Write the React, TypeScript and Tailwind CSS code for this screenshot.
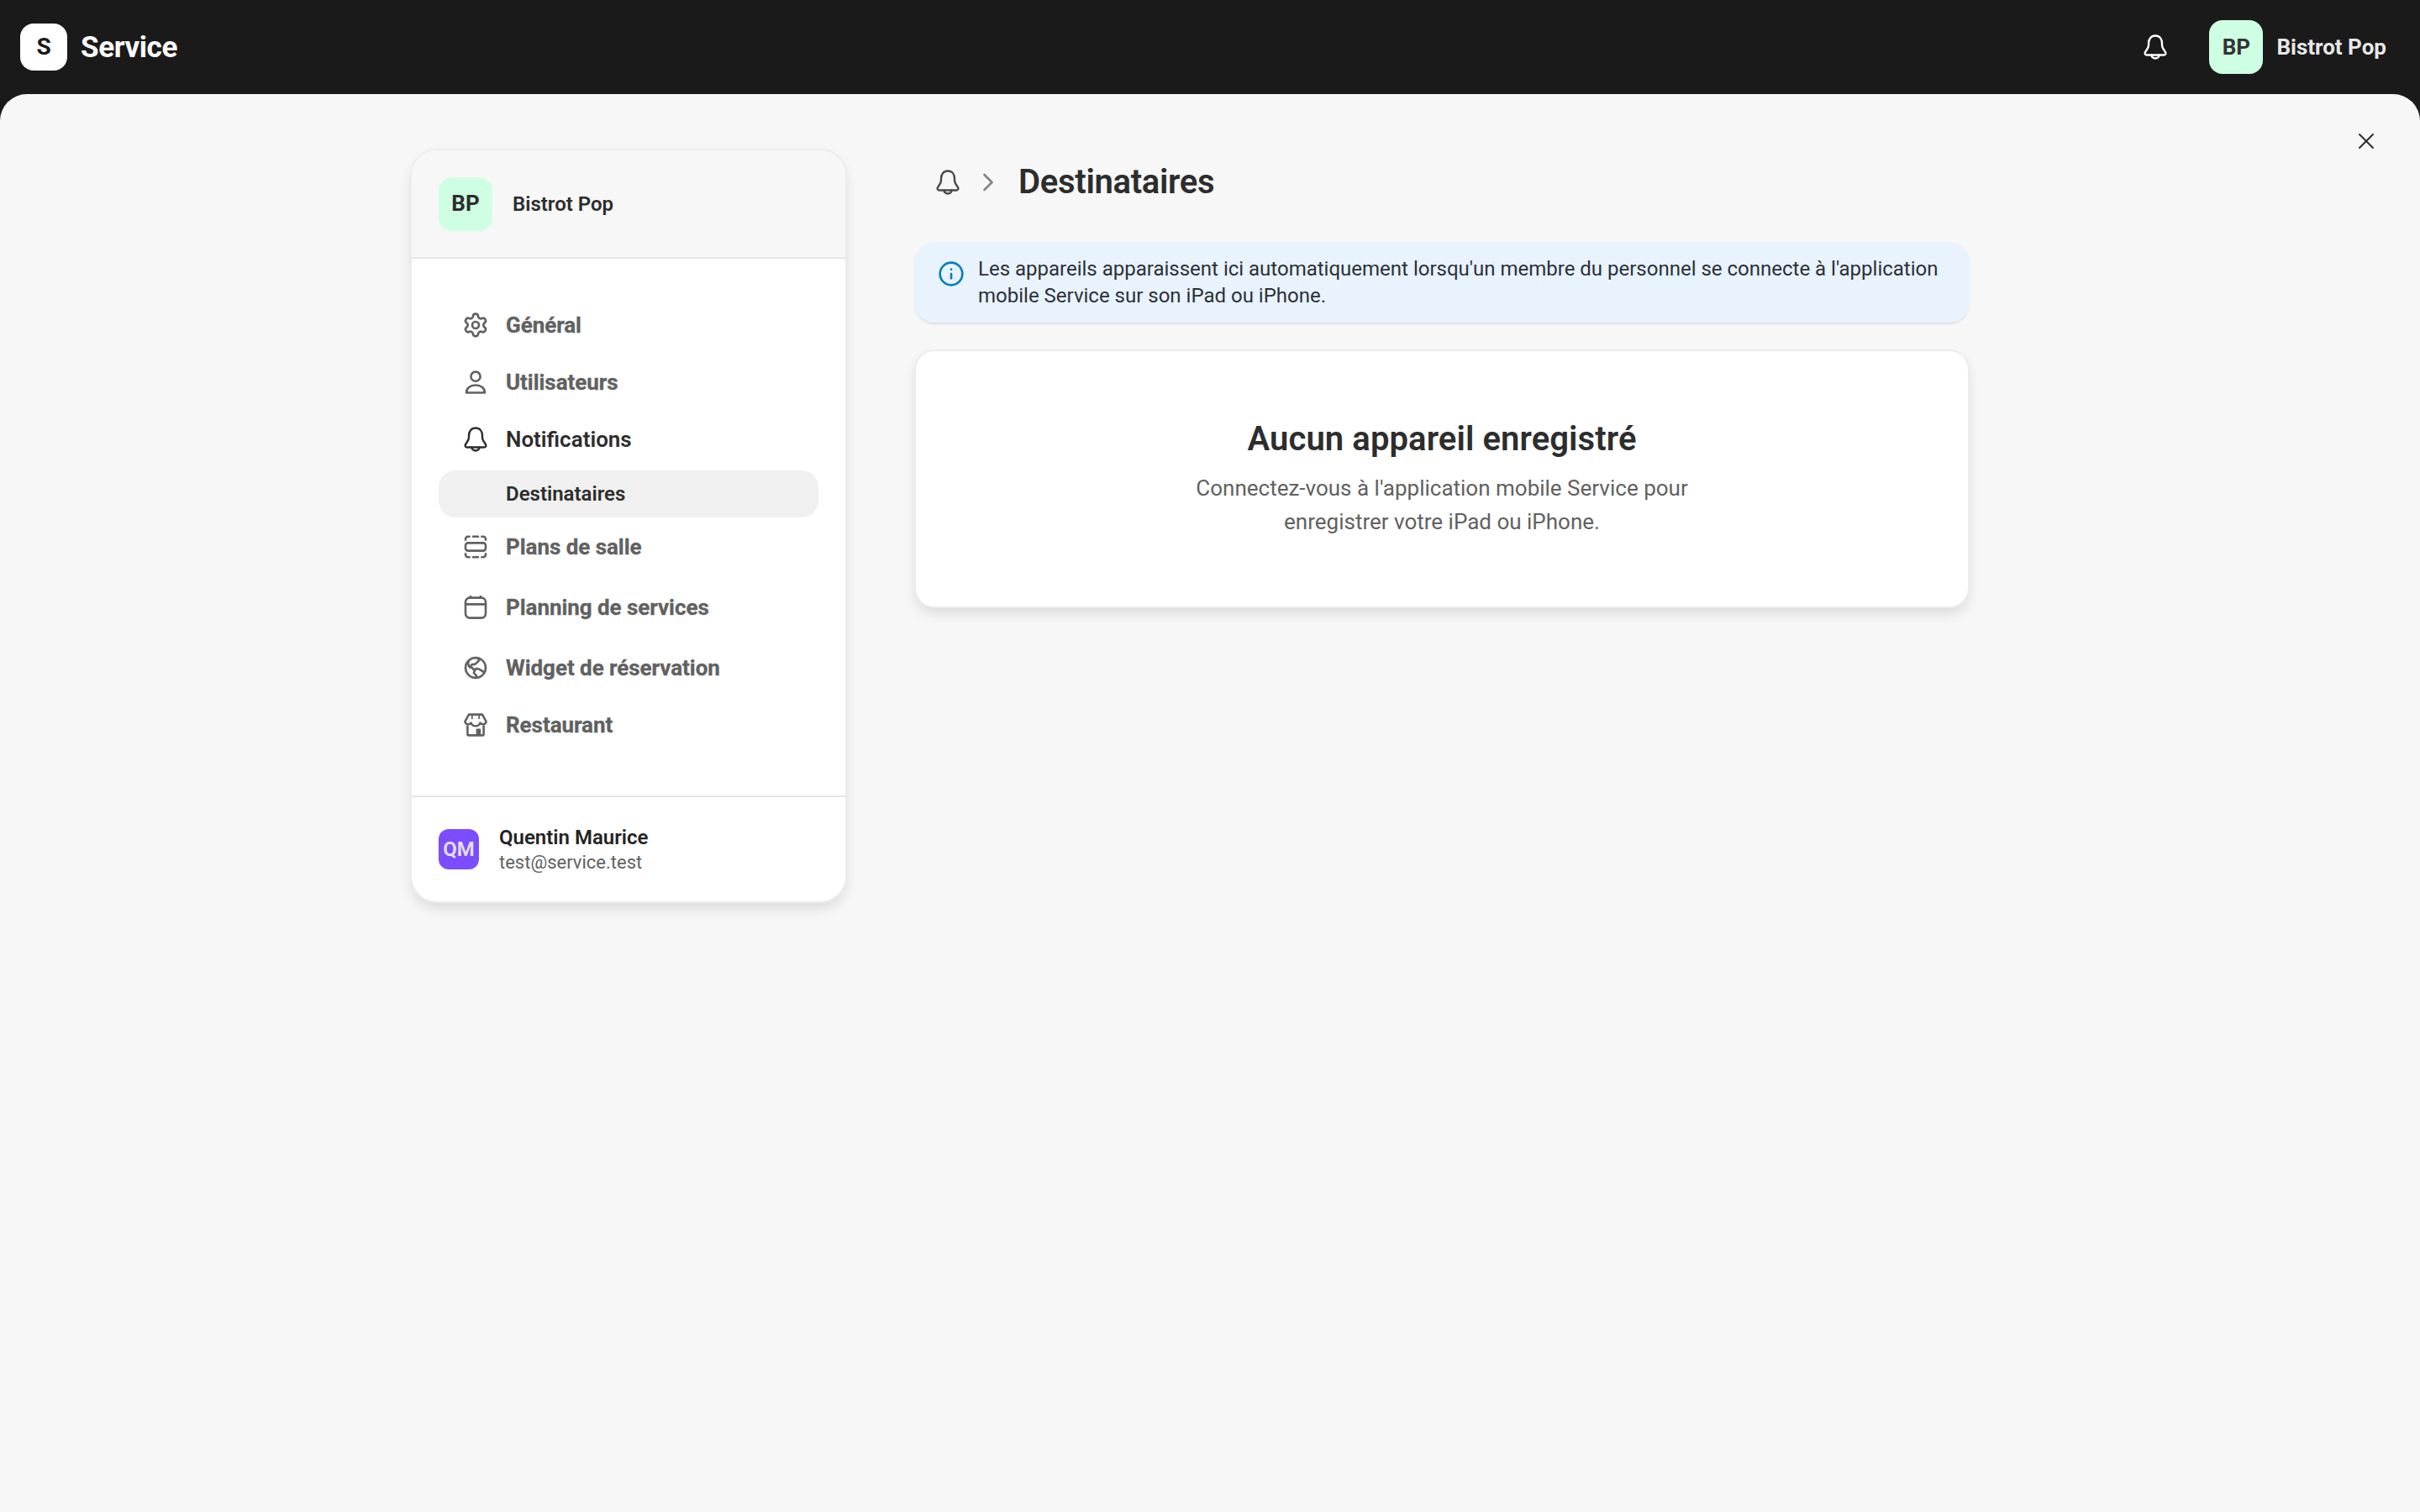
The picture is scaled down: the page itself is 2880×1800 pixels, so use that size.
import { X, ChevronRight, Settings, Info } from 'lucide-react';
import { PiGlobeHemisphereWest } from 'react-icons/pi';

function BellIcon({ className }: { className?: string }) {
  return (
    <svg viewBox="0 0 28 30" fill="none" stroke="currentColor" strokeWidth="2.4" strokeLinejoin="round" strokeLinecap="round" className={className}>
      <path d="M14 1.5C8.8 1.5 6 5.6 6 10.5V13C6 16.8 3 18.8 1.8 21.5C1.2 23 2.2 24.5 3.8 24.5H24.2C25.8 24.5 26.8 23 26.2 21.5C25 18.8 22 16.8 22 13V10.5C22 5.6 19.2 1.5 14 1.5Z" />
      <path d="M9.5 24.5C9.5 27 11.5 28.5 14 28.5C16.5 28.5 18.5 27 18.5 24.5" />
    </svg>
  );
}

function UserIcon({ className }: { className?: string }) {
  return (
    <svg viewBox="0 0 28 28" fill="none" stroke="currentColor" strokeWidth="2.6" strokeLinejoin="round" className={className}>
      <circle cx="14" cy="7.2" r="5.6" />
      <path d="M3 26.5C3 21 7.6 17.5 14 17.5S25 21 25 26.5Z" />
    </svg>
  );
}

function FloorIcon({ className }: { className?: string }) {
  return (
    <svg viewBox="0 0 28 28" fill="none" stroke="currentColor" strokeWidth="2.6" strokeLinecap="round" className={className}>
      <path d="M2 5.6V4.8A3 3 0 0 1 5 1.8H6.6M11 1.8H17M21.4 1.8H23A3 3 0 0 1 26 4.8V5.6" />
      <path d="M2 22.4V23.2A3 3 0 0 0 5 26.2H6.6M11 26.2H17M21.4 26.2H23A3 3 0 0 0 26 23.2V22.4" />
      <rect x="2" y="9.4" width="24" height="9.2" rx="3" />
    </svg>
  );
}

function CalendarIcon({ className }: { className?: string }) {
  return (
    <svg viewBox="0 0 28 28" fill="none" stroke="currentColor" strokeWidth="2.6" strokeLinecap="round" className={className}>
      <rect x="2" y="2.6" width="24" height="24" rx="5" />
      <path d="M2 10.4H26M8 .8V2.6M20 .8V2.6" />
    </svg>
  );
}

function StoreIcon({ className }: { className?: string }) {
  return (
    <svg viewBox="0 0 28 28" fill="none" stroke="currentColor" strokeWidth="2.6" strokeLinejoin="round" className={className}>
      <path d="M6 1.6H22L26.6 10A4 4 0 0 1 19.4 11.6A5.8 5.8 0 0 1 8.6 11.6A4 4 0 0 1 1.4 10Z" />
      <path d="M4.4 14.6V25A1.4 1.4 0 0 0 5.8 26.4H22.2A1.4 1.4 0 0 0 23.6 25V14.6" />
      <path d="M9.8 2V7M18.2 2V7" strokeWidth="1.8" />
      <rect x="14.6" y="18.6" width="5.6" height="7.4" fill="currentColor" stroke="none" rx="1" />
    </svg>
  );
}

export default function App() {
  return (
    <div className="flex h-[1800px] w-[2880px] flex-col overflow-hidden bg-[#1a1a1a] font-[Roboto,sans-serif]">
      <header className="flex h-[112px] shrink-0 items-center justify-between pl-[24px] pr-[40px]">
        <div className="flex items-center gap-[16px]">
          <div className="flex h-[56px] w-[56px] items-center justify-center rounded-[16px] bg-white text-[28px] font-bold text-[#1a1a1a]">S</div>
          <span className="text-[35px] font-bold leading-none tracking-[-0.4px] text-white">Service</span>
        </div>
        <div className="flex items-center">
          <BellIcon className="mr-[50px] h-[30px] w-[28px] text-white" />
          <div className="flex h-[64px] w-[64px] items-center justify-center rounded-[16px] bg-[#cfffe2] text-[26px] font-bold text-[#333333]">BP</div>
          <span className="ml-[16px] text-[26px] font-bold text-[#e8e8e8]">Bistrot Pop</span>
        </div>
      </header>

      <main className="relative flex flex-1 items-start rounded-t-[32px] bg-[#f7f7f7] pl-[488px] pt-[65px]">
        <button className="absolute right-[48px] top-[40px] text-[#2d2d2d]">
          <X className="h-[32px] w-[32px]" strokeWidth={1.5} />
        </button>

        <aside className="w-[520px] shrink-0 overflow-hidden rounded-[32px] border-2 border-[#ececec] bg-white shadow-[0_8px_16px_-2px_rgba(0,0,0,0.12)]">
          <div className="flex h-[127px] items-center gap-[24px] bg-[#f7f7f7] px-[32px]">
            <div className="flex h-[64px] w-[64px] items-center justify-center rounded-[16px] bg-[#cfffe2] text-[26px] font-bold text-[#2d2d2d]">BP</div>
            <span className="text-[24px] font-semibold text-[#2d2d2d]">Bistrot Pop</span>
          </div>
          <div className="border-t-2 border-[#e6e6e6] px-[32px] pb-[51px] pt-[44px]">
            <NavRow icon={<Settings className="h-[32px] w-[32px]" strokeWidth={2} />} label="Général" />
            <NavRow icon={<UserIcon className="h-[28px] w-[28px]" />} label="Utilisateurs" />
            <NavRow icon={<BellIcon className="h-[30px] w-[28px]" />} label="Notifications" active />
            <div className="mt-[4px] flex h-[56px] items-center rounded-[20px] bg-[#f0f0f0] pl-[80px] text-[24px] font-semibold text-[#2d2d2d]">Destinataires</div>
            <NavRow icon={<FloorIcon className="h-[28px] w-[28px]" />} label="Plans de salle" />
            <NavRow icon={<CalendarIcon className="h-[28px] w-[28px]" />} label="Planning de services" spaced />
            <NavRow icon={<PiGlobeHemisphereWest className="h-[32px] w-[32px] stroke-current stroke-[6]" />} label="Widget de réservation" spaced />
            <NavRow icon={<StoreIcon className="h-[28px] w-[28px]" />} label="Restaurant" />
          </div>
          <div className="flex h-[126px] items-center gap-[24px] border-t-2 border-[#e6e6e6] px-[32px]">
            <div className="flex h-[48px] w-[48px] items-center justify-center rounded-[12px] bg-[#7c4dff] text-[24px] font-semibold text-[#e6e0f5]">QM</div>
            <div className="pt-[2px]">
              <div className="text-[24px] font-semibold leading-[30px] text-[#242424]">Quentin Maurice</div>
              <div className="text-[22px] leading-[30px] text-[#616161]">test@service.test</div>
            </div>
          </div>
        </aside>

        <section className="ml-[80px] w-[1256px] pt-[16px]">
          <div className="flex h-[48px] items-center">
            <BellIcon className="ml-[26px] h-[30px] w-[28px] text-[#4a4a4a]" />
            <ChevronRight className="ml-[16px] h-[36px] w-[36px] text-[#858585]" strokeWidth={1.8} />
            <h1 className="ml-[18px] text-[40px] font-semibold leading-none tracking-[-0.3px] text-[#2d2d2d]">Destinataires</h1>
          </div>

          <div className="mt-[47px] flex h-[96px] gap-[16px] rounded-[24px] bg-[#e8f3fe] pl-[28px] pr-[32px] pt-[16px] shadow-[0_3px_3px_-1px_rgba(0,0,0,0.1)]">
            <Info className="mt-[6px] h-[32px] w-[32px] shrink-0 text-[#0a7fb8]" strokeWidth={2} />
            <p className="text-[24px] leading-[32px] text-[#2d3038]">
              Les appareils apparaissent ici automatiquement lorsqu'un membre du personnel se connecte à l'application mobile Service sur son iPad ou iPhone.
            </p>
          </div>

          <div className="mt-[32px] flex h-[308px] flex-col items-center rounded-[24px] border-2 border-[#ececec] bg-white pt-[81px] shadow-[0_8px_16px_-2px_rgba(0,0,0,0.12)]">
            <h2 className="text-[40px] font-semibold leading-[48px] tracking-[0.1px] text-[#2d2d2d]">Aucun appareil enregistré</h2>
            <p className="mt-[14px] max-w-[640px] text-center text-[26px] leading-[40px] text-[#616161]">
              Connectez-vous à l'application mobile Service pour enregistrer votre iPad ou iPhone.
            </p>
          </div>
        </section>
      </main>
    </div>
  );
}

function NavRow({ icon, label, active, spaced }: { icon: React.ReactNode; label: string; active?: boolean; spaced?: boolean }) {
  return (
    <div className={`flex h-[68px] items-center pt-[2px] ${spaced ? 'mt-[4px]' : ''} ${active ? 'text-[#2d2d2d]' : 'text-[#616161]'}`}>
      <span className="flex w-[80px] shrink-0 justify-center pl-[8px]">{icon}</span>
      <span className={`text-[26px] ${active ? 'font-semibold' : 'font-bold tracking-[-0.05px] [-webkit-text-stroke:0.3px_currentColor]'}`}>{label}</span>
    </div>
  );
}
